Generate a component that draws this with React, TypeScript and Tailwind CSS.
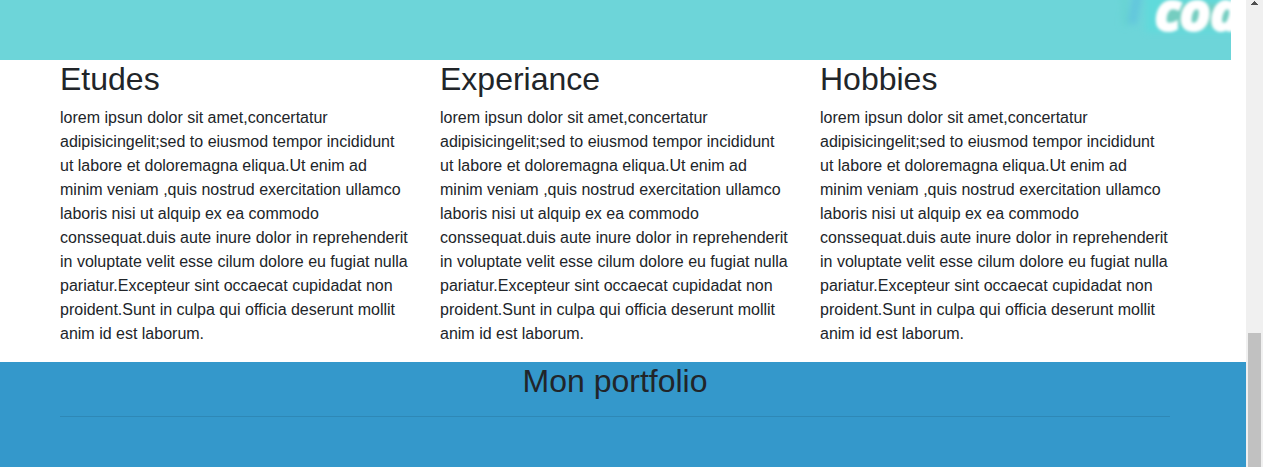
const LOREM =
  'lorem ipsun dolor sit amet,concertatur adipisicingelit;sed to eiusmod tempor incididunt ut labore et doloremagna eliqua.Ut enim ad minim veniam ,quis nostrud exercitation ullamco laboris nisi ut alquip ex ea commodo conssequat.duis aute inure dolor in reprehenderit in voluptate velit esse cilum dolore eu fugiat nulla pariatur.Excepteur sint occaecat cupidadat non proident.Sunt in culpa qui officia deserunt mollit anim id est laborum.';

const SECTIONS = ['Etudes', 'Experiance', 'Hobbies'];

function Banner() {
  return (
    <header className="mr-[15px] flex h-[60px] justify-end overflow-hidden bg-[#6dd5d9]">
      <svg width="131" height="60" viewBox="0 0 131 60" role="img" aria-label="cod">
        <defs>
          <filter id="soft" x="-20%" y="-20%" width="140%" height="140%">
            <feGaussianBlur stdDeviation="1.7" />
          </filter>
          <filter id="glow" x="-50%" y="-50%" width="200%" height="200%">
            <feGaussianBlur stdDeviation="3" />
          </filter>
        </defs>
        <g filter="url(#glow)">
          <rect x="46" y="-8" width="90" height="40" fill="#5edadb" />
          <rect x="62" y="4" width="70" height="22" fill="#74cdc0" />
          <path d="M38 -8L32 24" stroke="#62c6dd" strokeWidth="9" />
          <path d="M24 -8L25 26" stroke="#66d3d0" strokeWidth="5" />
        </g>
        <g filter="url(#soft)">
          <text
            x="55"
            y="30"
            fill="#ffffff"
            stroke="#ffffff"
            strokeWidth="3"
            fontSize="52"
            fontWeight="700"
            fontStyle="italic"
            fontFamily="'Open Sans', sans-serif"
          >
            cod
          </text>
        </g>
      </svg>
    </header>
  );
}

function About() {
  return (
    <section className="mr-4">
      <div className="mx-auto grid max-w-[1140px] grid-cols-3">
        {SECTIONS.map((title) => (
          <article key={title} className="px-[15px] pb-4">
            <h2 className="mb-2 text-[32px] leading-[38px]">{title}</h2>
            <p>{LOREM}</p>
          </article>
        ))}
      </div>
    </section>
  );
}

function Portfolio() {
  return (
    <section className="grow bg-[#3498cb] pr-4 pb-[50px]">
      <div className="mx-auto max-w-[1140px] px-[15px]">
        <h2 className="text-center text-[32px] leading-[38px]">Mon portfolio</h2>
        <hr className="mt-4 border-black/10" />
      </div>
    </section>
  );
}

function ScrollTrack() {
  return (
    <div aria-hidden="true" className="flex w-[17px] shrink-0 flex-col items-center bg-[#f0f0f0]">
      <svg width="7" height="5" viewBox="0 0 7 5" fill="#505050" shapeRendering="crispEdges">
        <path d="M3 1h1v1h1v1h1v1h1v1H0V4h1V3h1V2h1z" />
      </svg>
      <div className="mt-auto h-[134px] w-[13px] bg-[#c1c1c1]" />
    </div>
  );
}

export default function App() {
  return (
    <div className="flex min-h-screen bg-white font-['Liberation_Sans',Arial,sans-serif] text-base text-[#212529]">
      <main className="flex min-w-0 flex-1 flex-col">
        <Banner />
        <About />
        <Portfolio />
      </main>
      <ScrollTrack />
    </div>
  );
}
